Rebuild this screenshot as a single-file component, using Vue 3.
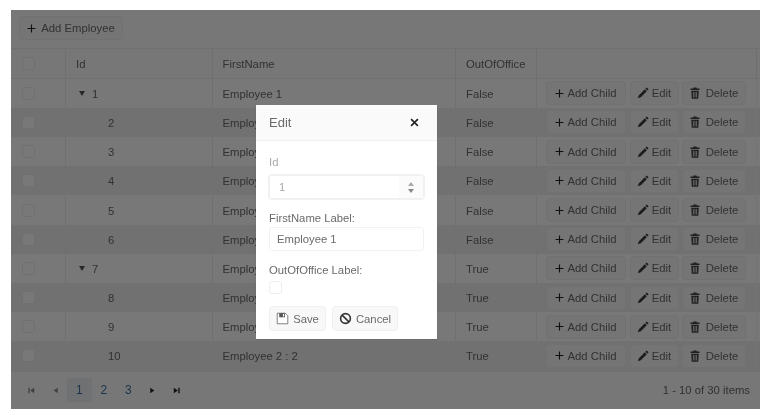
<template>
  <div class="page">
    <div class="grid">
      <div class="toolbar">
        <button class="btn">
          <svg class="icon plus" viewBox="0 0 16 16"><path d="M7 1h2v6h6v2H9v6H7V9H1V7h6z" /></svg>
          Add Employee
        </button>
      </div>

      <div class="row head">
        <div class="cell col-check"><span class="check"></span></div>
        <div class="cell col-id">Id</div>
        <div class="cell col-name">FirstName</div>
        <div class="cell col-out">OutOfOffice</div>
        <div class="cell col-cmd"></div>
      </div>

      <div
        v-for="(row, i) in rows"
        :key="row.id"
        class="row"
        :class="{ alt: i % 2 === 1 }"
      >
        <div class="cell col-check"><span class="check"></span></div>
        <div class="cell col-id">
          <span v-if="row.parent" class="tree"><span class="arrow"></span>{{ row.id }}</span>
          <span v-else class="leaf">{{ row.id }}</span>
        </div>
        <div class="cell col-name">{{ row.name }}</div>
        <div class="cell col-out">{{ row.out }}</div>
        <div class="cell col-cmd">
          <button class="btn small">
            <svg class="icon plus" viewBox="0 0 16 16"><path d="M7 1h2v6h6v2H9v6H7V9H1V7h6z" /></svg>
            Add Child
          </button>
          <button class="btn small">
            <svg class="icon pencil" viewBox="0 0 16 16"><path d="M13 0.500l2.500 2.500-1.800 1.800-2.500-2.500zM10.500 3l2.500 2.500-8 8-4 1.500 1.500-4z" /></svg>
            Edit
          </button>
          <button class="btn small">
            <svg class="icon trash" viewBox="0 0 16 16"><path d="M6 0.500h4l.5 1.500H14v2H2V2h3.500zM3 5h10l-.7 10.500H3.700zM5.300 6.500v7.500h1v-7.500zm2.200 0v7.500h1v-7.500zm2.200 0v7.500h1v-7.500z" fill-rule="evenodd" /></svg>
            Delete
          </button>
        </div>
      </div>

      <div class="pager">
        <div class="pages">
          <span class="nav muted"><svg viewBox="0 0 10 10"><path d="M1.500 2h1.500v6H1.500zM8 2v6L3.500 5z" /></svg></span>
          <span class="nav muted"><svg viewBox="0 0 10 10"><path d="M7.500 2v6L3 5z" /></svg></span>
          <span class="page-num active">1</span>
          <span class="page-num">2</span>
          <span class="page-num">3</span>
          <span class="nav"><svg viewBox="0 0 10 10"><path d="M2.500 2v6L7 5z" /></svg></span>
          <span class="nav"><svg viewBox="0 0 10 10"><path d="M2 2v6l4.500-3zM7 2h1.500v6H7z" /></svg></span>
        </div>
        <div class="info">1 - 10 of 30 items</div>
      </div>

      <div class="overlay"></div>

      <div class="dialog">
        <div class="dialog-title">
          <span>Edit</span>
          <svg class="close" viewBox="0 0 10 10"><path d="M1.200 1.200l7.600 7.600M8.800 1.200l-7.600 7.600" /></svg>
        </div>
        <div class="dialog-body">
          <label class="label disabled">Id</label>
          <div class="numeric">
            <span class="numeric-value">1</span>
            <span class="spin">
              <i class="up"></i>
              <i class="down"></i>
            </span>
          </div>
          <label class="label">FirstName Label:</label>
          <div class="text-input">Employee 1</div>
          <label class="label out-label">OutOfOffice Label:</label>
          <span class="check white"></span>
          <div class="actions">
            <button class="btn modal-btn">
              <svg class="icon floppy" viewBox="0 0 16 16"><path d="M1.500 1.500h10l3 3v10h-13z" /><path class="solid" d="M4 1.500h7v5H4z" /><path class="cut" d="M8.500 2.500h1.500v3H8.500z" /></svg>
              Save
            </button>
            <button class="btn modal-btn">
              <svg class="icon ban" viewBox="0 0 16 16"><circle cx="8" cy="8" r="6" /><path d="M3.800 3.800l8.400 8.400" /></svg>
              Cancel
            </button>
          </div>
        </div>
      </div>
    </div>
  </div>
</template>

<script setup>
const names = ['Employee 1', 'Employee 1 : 1', 'Employee 1 : 2', 'Employee 1 : 3', 'Employee 1 : 4', 'Employee 1 : 5', 'Employee 2', 'Employee 2 : 0', 'Employee 2 : 1', 'Employee 2 : 2']

const rows = names.map((name, i) => ({
  id: i + 1,
  name,
  out: i < 6 ? 'False' : 'True',
  parent: i === 0 || i === 6,
}))
</script>

<style>
html, body {
  margin: 0;
  background: #fff;
}
</style>

<style scoped>
.page {
  width: 770px;
  height: 418px;
  padding: 10px 0 0 11px;
  box-sizing: border-box;
  font-family: "Liberation Sans", Arial, sans-serif;
  font-size: 11.300px;
  color: #6a6a6a;
  overflow: hidden;
  filter: blur(0.4px);
}

.grid {
  position: relative;
  width: 749px;
  height: 399px;
  display: flex;
  flex-direction: column;
  background: #fff;
}

.toolbar {
  height: 38.700px;
  flex: none;
  display: flex;
  align-items: center;
  padding-left: 8px;
  box-sizing: border-box;
  border-bottom: 1px solid #efefef;
  background: #fcfcfc;
}

.btn {
  display: inline-flex;
  align-items: center;
  justify-content: center;
  gap: 4px;
  font: inherit;
  color: #6a6a6a;
  background: #f8f8f8;
  border: 1px solid #f0f0f0;
  border-radius: 4px;
  padding: 0;
  box-sizing: border-box;
}

.toolbar .btn {
  width: 104px;
  height: 24px;
  margin-bottom: 1px;
  gap: 5px;
}

.icon {
  flex: none;
  fill: #4a4a4a;
}

.icon.plus {
  width: 9px;
  height: 9px;
  fill: #222;
}

.icon.pencil {
  width: 12px;
  height: 12px;
  fill: #3c3c3c;
}

.icon.trash {
  width: 12px;
  height: 12px;
  fill: #444;
}

.icon.floppy {
  width: 13px;
  height: 13px;
  fill: #fff;
  stroke: #666;
  stroke-width: 1;
}

.floppy .solid {
  fill: #555;
  stroke: none;
}

.floppy .cut {
  fill: #fff;
  stroke: none;
}

.icon.ban {
  width: 13px;
  height: 13px;
  fill: none;
  stroke: #333;
  stroke-width: 2;
}

.row {
  display: flex;
  flex: none;
  height: 29.200px;
  background: #fff;
}

.row.head {
  height: 30px;
  background: #fcfcfc;
  border-bottom: 1px solid #efefef;
  box-sizing: border-box;
}

.row.alt {
  background: #f0f0f0;
}

.cell {
  display: flex;
  align-items: center;
  box-sizing: border-box;
  padding-left: 10px;
  padding-top: 1px;
  border-left: 1px solid #efefef;
}

.col-check {
  width: 54px;
  border-left: 0;
  padding-left: 11px;
  padding-top: 0;
}

.col-id {
  width: 146.500px;
}

.col-name {
  width: 243.500px;
}

.col-out {
  width: 80.500px;
  padding-left: 10px;
}

.col-cmd {
  width: 221.500px;
  gap: 4px;
  padding-left: 9px;
  padding-top: 0;
  border-right: 1px solid #f4f4f4;
}

.head .col-cmd {
  border-right-color: #eaeaea;
}

.check {
  display: block;
  width: 13px;
  height: 13px;
  box-sizing: border-box;
  border: 1px solid #efefef;
  border-radius: 3px;
  background: #fff;
}

.tree {
  display: flex;
  align-items: center;
  padding-left: 3px;
  gap: 7px;
}

.arrow {
  width: 0;
  height: 0;
  border-left: 3px solid transparent;
  border-right: 3px solid transparent;
  border-top: 5px solid #555;
}

.leaf {
  padding-left: 32px;
}

.btn.small {
  height: 24px;
  width: 80px;
}

.btn.small:nth-child(2) {
  width: 49px;
  gap: 3px;
  margin-right: -1px;
}

.btn.small:nth-child(3) {
  width: 64px;
  gap: 5px;
}

.pager {
  flex: 1;
  display: flex;
  align-items: center;
  justify-content: space-between;
  background: #fcfcfc;
  border-top: 1px solid #efefef;
  box-sizing: border-box;
}

.pages {
  display: flex;
  align-items: center;
  padding-left: 8px;
}

.nav {
  width: 24px;
  display: flex;
  justify-content: center;
}

.nav svg {
  width: 9px;
  height: 9px;
  fill: #222;
}

.nav.muted svg {
  fill: #8a8a8a;
}

.page-num {
  width: 24.500px;
  height: 24px;
  display: flex;
  align-items: center;
  justify-content: center;
  font-size: 12px;
  color: #3d70a0;
}

.page-num.active {
  background: #eef0f2;
}

.info {
  padding-right: 10px;
}

.overlay {
  position: absolute;
  inset: 0;
  background: rgba(0, 0, 0, 0.53);
}

.dialog {
  position: absolute;
  left: 245px;
  top: 95px;
  width: 181px;
  height: 234px;
  background: #fff;
  box-shadow: 0 1px 1px rgba(0, 0, 0, 0.12);
}

.dialog-title {
  height: 36px;
  display: flex;
  align-items: center;
  justify-content: space-between;
  padding: 0 18px 0 13px;
  font-size: 13px;
  background: #fafafa;
  border-bottom: 1px solid #f0f0f0;
  box-sizing: border-box;
}

.close {
  width: 9px;
  height: 9px;
  fill: none;
  stroke: #222;
  stroke-width: 1.800;
}

.dialog-body {
  padding: 14px 13px 0;
  display: flex;
  flex-direction: column;
  align-items: flex-start;
}

.label {
  line-height: 14px;
}

.label.disabled {
  color: #aaa;
}

.numeric {
  margin-top: 6px;
  margin-bottom: 12px;
  width: 155px;
  height: 24px;
  display: flex;
  align-items: center;
  justify-content: space-between;
  border: 1px solid #f0f0f0;
  border-radius: 3px;
  box-sizing: border-box;
  color: #aaa;
  padding-left: 9px;
  box-shadow: 0 0 0 1px #f2f2f2;
}

.spin {
  width: 24px;
  height: 22px;
  display: flex;
  flex-direction: column;
  align-items: center;
  justify-content: center;
  gap: 3px;
  background: #fbfbfb;
}

.spin i {
  width: 0;
  height: 0;
  border-left: 3px solid transparent;
  border-right: 3px solid transparent;
}

.spin .up {
  border-bottom: 4px solid #aaa;
}

.spin .down {
  border-top: 4px solid #888;
}

.text-input {
  margin-top: 2px;
  width: 155px;
  height: 24px;
  display: flex;
  align-items: center;
  padding-left: 7px;
  border: 1px solid #f2f2f2;
  border-radius: 3px;
  box-sizing: border-box;
}

.out-label {
  margin-top: 12px;
}

.check.white {
  margin-top: 4px;
}

.actions {
  margin-top: 12px;
  display: flex;
  gap: 6px;
}

.modal-btn {
  height: 25px;
  width: 57px;
}

.modal-btn:last-child {
  width: 66px;
}
</style>
